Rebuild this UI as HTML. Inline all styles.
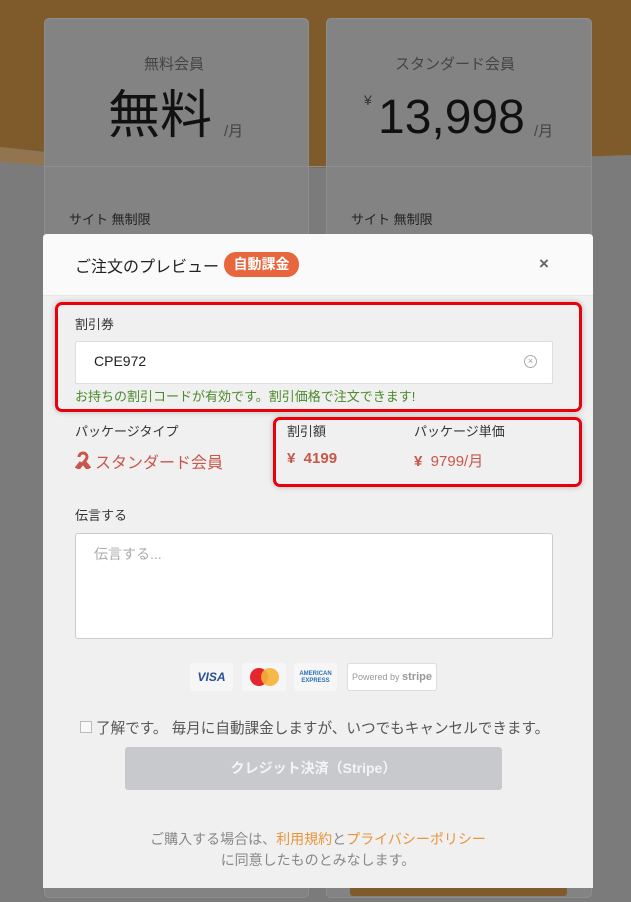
<!DOCTYPE html>
<html><head><meta charset="utf-8"><style>
*{margin:0;padding:0;box-sizing:border-box}
html,body{width:631px;height:902px;overflow:hidden}
body{position:relative;background:#7b7b7b;font-family:"Liberation Sans","Noto Sans CJK JP",sans-serif}
.a{position:absolute;white-space:nowrap}
.card{position:absolute;top:18px;height:880px;background:#838383;border:1px solid #8d8d8d;border-radius:5px}
.lbl{font-size:13px;color:#333}
.red{border:3px solid #e8000a;border-radius:7px;position:absolute;box-shadow:0 0 6px rgba(0,0,0,.25)}
.logo{position:absolute;top:663px;height:28px;background:#f6f6f6;border-radius:3px}
</style></head><body>
<svg class="a" style="left:0;top:0" width="631" height="260"><path d="M0 147C30 150 70 158 120 165L120 172C70 168 30 164 0 162Z" fill="#92754f"/><path d="M0 0H631V155C560 157 470 162 400 166C300 172 200 160 100 158C60 154 30 150 0 147Z" fill="#7f5a2a"/></svg>
<div class="card" style="left:44px;width:265px"></div>
<div class="card" style="left:326px;width:266px"></div>
<div class="a" style="left:44px;top:166px;width:548px;border-top:1px solid #8e8e8e"></div>
<div class="a" style="left:144px;top:53px;font-size:15px;color:#444">無料会員</div>
<div class="a" style="left:108px;top:86px;font-size:52px;color:#111;line-height:60px">無料</div>
<div class="a" style="left:224px;top:120px;font-size:15px;color:#444">/月</div>
<div class="a" style="left:395px;top:53px;font-size:15px;color:#444">スタンダード会員</div>
<div class="a" style="left:364px;top:92px;font-size:14px;color:#333">¥</div>
<div class="a" style="left:378px;top:90px;font-size:48px;color:#111;line-height:56px">13,998</div>
<div class="a" style="left:534px;top:120px;font-size:15px;color:#444">/月</div>
<div class="a" style="left:69px;top:209px;font-size:13px;color:#222">サイト 無制限</div>
<div class="a" style="left:351px;top:209px;font-size:13px;color:#222">サイト 無制限</div>
<div class="a" style="left:350px;top:880px;width:217px;height:16px;background:#7f5a2a;border-radius:3px"></div>

<div class="a" style="left:43px;top:234px;width:550px;height:654px;background:#f0f0f0;border-radius:4px 4px 0 0"></div>
<div class="a" style="left:43px;top:234px;width:550px;height:62px;background:#fafafb;border-bottom:1px solid #e6e6e6;border-radius:4px 4px 0 0"></div>
<div class="a" style="left:75px;top:253px;font-size:16px;color:#222">ご注文のプレビュー</div>
<div class="a" style="left:224px;top:252px;width:75px;height:25px;background:#e8663d;border-radius:12px;color:#fff;font-size:14px;font-weight:bold;text-align:center;line-height:25px">自動課金</div>
<div class="a" style="left:539px;top:254px;font-size:17px;font-weight:bold;color:#666">×</div>

<div class="red" style="left:55px;top:302px;width:527px;height:110px"></div>
<div class="a lbl" style="left:75px;top:314px">割引券</div>
<div class="a" style="left:75px;top:341px;width:478px;height:43px;background:#fff;border:1px solid #ddd;border-radius:2px"></div>
<div class="a" style="left:94px;top:353px;font-size:14px;color:#222">CPE972</div>
<div class="a" style="left:524px;top:355px;width:13px;height:13px;border:1.5px solid #aaa;border-radius:50%;font-size:9px;color:#999;text-align:center;line-height:10px">×</div>
<div class="a" style="left:75px;top:386px;font-size:13px;color:#4a8a2a">お持ちの割引コードが有効です。割引価格で注文できます!</div>

<div class="red" style="left:273px;top:417px;width:309px;height:70px"></div>
<div class="a lbl" style="left:75px;top:421px">パッケージタイプ</div>
<div class="a lbl" style="left:287px;top:421px">割引額</div>
<div class="a lbl" style="left:414px;top:421px">パッケージ単価</div>
<svg class="a" style="left:75px;top:451px" width="16" height="18" viewBox="0 0 16 18"><path d="M4 6a4 4 0 1 1 8 0c0 2-2 4-4 6l-4 5-2-1 4-5M8 12l4 5 2-1-4-5" fill="none" stroke="#c9564a" stroke-width="3"/></svg>
<div class="a" style="left:95px;top:449px;font-size:16px;color:#c9564a">スタンダード会員</div>
<div class="a" style="left:287px;top:450px;font-size:15px;color:#c9564a;font-weight:bold">¥ &nbsp;4199</div>
<div class="a" style="left:414px;top:450px;font-size:15px;color:#c9564a"><b>¥</b> &nbsp;9799/月</div>

<div class="a lbl" style="left:75px;top:505px">伝言する</div>
<div class="a" style="left:75px;top:533px;width:478px;height:106px;background:#fff;border:1px solid #ccc;border-radius:3px"></div>
<div class="a" style="left:94px;top:544px;font-size:14px;color:#aaa">伝言する...</div>

<div class="logo" style="left:190px;width:43px;font:italic bold 12px 'Liberation Sans';color:#2a4e96;text-align:center;line-height:28px">VISA</div>
<div class="logo" style="left:242px;width:44px"><div class="a" style="left:8px;top:5px;width:18px;height:18px;border-radius:50%;background:#e5262c"></div><div class="a" style="left:19px;top:5px;width:18px;height:18px;border-radius:50%;background:#f6b136;opacity:.9"></div></div>
<div class="logo" style="left:294px;width:43px;font:bold 6px 'Liberation Sans';color:#2b72b8;text-align:center;padding-top:8px;line-height:7px">AMERICAN<br>EXPRESS</div>
<div class="logo" style="left:347px;width:90px;background:#fff;border:1px solid #ddd;font-size:9px;color:#999;text-align:center;line-height:26px">Powered by <b style="font-size:11px;color:#999">stripe</b></div>

<div class="a" style="left:80px;top:721px;width:12px;height:12px;border:1px solid #bbb;background:#f8f8f8"></div>
<div class="a" style="left:96px;top:717px;font-size:14.6px;color:#555">了解です。 毎月に自動課金しますが、いつでもキャンセルできます。</div>
<div class="a" style="left:125px;top:747px;width:377px;height:43px;background:#c8c9cc;border-radius:3px;color:#f4f4f4;font-size:14px;font-weight:bold;text-align:center;line-height:43px">クレジット決済（Stripe）</div>
<div class="a" style="left:0;top:829px;width:636px;text-align:center;font-size:14px;color:#888;line-height:21px">ご購入する場合は、<span style="color:#e8953a">利用規約</span>と<span style="color:#e8953a">プライバシーポリシー</span><br>に同意したものとみなします。</div>
</body></html>
